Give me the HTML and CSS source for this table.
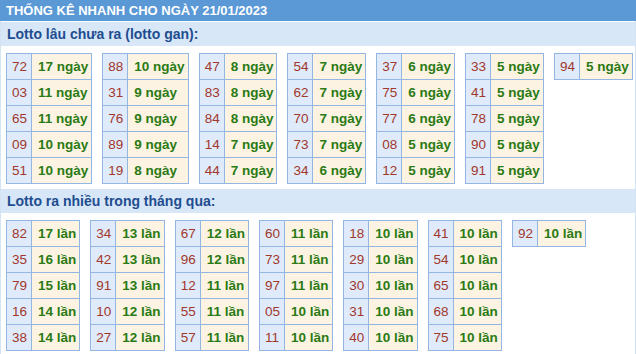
FILE: index.html
```html
<!DOCTYPE html>
<html lang="vi">
<head>
<meta charset="utf-8">
<title>Thống kê nhanh</title>
<link rel="stylesheet" href="styles.css">
</head>
<body>
<div class="box">
  <div class="head">THỐNG KÊ NHANH CHO NGÀY 21/01/2023</div>
  <div class="sec-title">Lotto lâu chưa ra (lotto gan):</div>
  <div class="tables">
    <table class="t"><tr><td class="n">72</td><td class="v">17 ngày</td></tr><tr><td class="n">03</td><td class="v">11 ngày</td></tr><tr><td class="n">65</td><td class="v">11 ngày</td></tr><tr><td class="n">09</td><td class="v">10 ngày</td></tr><tr><td class="n">51</td><td class="v">10 ngày</td></tr></table>
    <table class="t"><tr><td class="n">88</td><td class="v">10 ngày</td></tr><tr><td class="n">31</td><td class="v">9 ngày</td></tr><tr><td class="n">76</td><td class="v">9 ngày</td></tr><tr><td class="n">89</td><td class="v">9 ngày</td></tr><tr><td class="n">19</td><td class="v">8 ngày</td></tr></table>
    <table class="t"><tr><td class="n">47</td><td class="v">8 ngày</td></tr><tr><td class="n">83</td><td class="v">8 ngày</td></tr><tr><td class="n">84</td><td class="v">8 ngày</td></tr><tr><td class="n">14</td><td class="v">7 ngày</td></tr><tr><td class="n">44</td><td class="v">7 ngày</td></tr></table>
    <table class="t"><tr><td class="n">54</td><td class="v">7 ngày</td></tr><tr><td class="n">62</td><td class="v">7 ngày</td></tr><tr><td class="n">70</td><td class="v">7 ngày</td></tr><tr><td class="n">73</td><td class="v">7 ngày</td></tr><tr><td class="n">34</td><td class="v">6 ngày</td></tr></table>
    <table class="t"><tr><td class="n">37</td><td class="v">6 ngày</td></tr><tr><td class="n">75</td><td class="v">6 ngày</td></tr><tr><td class="n">77</td><td class="v">6 ngày</td></tr><tr><td class="n">08</td><td class="v">5 ngày</td></tr><tr><td class="n">12</td><td class="v">5 ngày</td></tr></table>
    <table class="t"><tr><td class="n">33</td><td class="v">5 ngày</td></tr><tr><td class="n">41</td><td class="v">5 ngày</td></tr><tr><td class="n">78</td><td class="v">5 ngày</td></tr><tr><td class="n">90</td><td class="v">5 ngày</td></tr><tr><td class="n">91</td><td class="v">5 ngày</td></tr></table>
    <table class="t"><tr><td class="n">94</td><td class="v">5 ngày</td></tr></table>
  </div>
  <div class="sec-title sec2">Lotto ra nhiều trong tháng qua:</div>
  <div class="tables">
    <table class="t"><tr><td class="n">82</td><td class="v">17 lần</td></tr><tr><td class="n">35</td><td class="v">16 lần</td></tr><tr><td class="n">79</td><td class="v">15 lần</td></tr><tr><td class="n">16</td><td class="v">14 lần</td></tr><tr><td class="n">38</td><td class="v">14 lần</td></tr></table>
    <table class="t"><tr><td class="n">34</td><td class="v">13 lần</td></tr><tr><td class="n">42</td><td class="v">13 lần</td></tr><tr><td class="n">91</td><td class="v">13 lần</td></tr><tr><td class="n">10</td><td class="v">12 lần</td></tr><tr><td class="n">27</td><td class="v">12 lần</td></tr></table>
    <table class="t"><tr><td class="n">67</td><td class="v">12 lần</td></tr><tr><td class="n">96</td><td class="v">12 lần</td></tr><tr><td class="n">12</td><td class="v">11 lần</td></tr><tr><td class="n">55</td><td class="v">11 lần</td></tr><tr><td class="n">57</td><td class="v">11 lần</td></tr></table>
    <table class="t"><tr><td class="n">60</td><td class="v">11 lần</td></tr><tr><td class="n">73</td><td class="v">11 lần</td></tr><tr><td class="n">97</td><td class="v">11 lần</td></tr><tr><td class="n">05</td><td class="v">10 lần</td></tr><tr><td class="n">11</td><td class="v">10 lần</td></tr></table>
    <table class="t"><tr><td class="n">18</td><td class="v">10 lần</td></tr><tr><td class="n">29</td><td class="v">10 lần</td></tr><tr><td class="n">30</td><td class="v">10 lần</td></tr><tr><td class="n">31</td><td class="v">10 lần</td></tr><tr><td class="n">40</td><td class="v">10 lần</td></tr></table>
    <table class="t"><tr><td class="n">41</td><td class="v">10 lần</td></tr><tr><td class="n">54</td><td class="v">10 lần</td></tr><tr><td class="n">65</td><td class="v">10 lần</td></tr><tr><td class="n">68</td><td class="v">10 lần</td></tr><tr><td class="n">75</td><td class="v">10 lần</td></tr></table>
    <table class="t"><tr><td class="n">92</td><td class="v">10 lần</td></tr></table>
  </div>
</div>
</body>
</html>
```
FILE: styles.css
```css
html, body {
  margin: 0;
  padding: 0;
  background: #ffffff;
}
body {
  font-family: Arial, "Liberation Sans", sans-serif;
}
.box {
  width: 636px;
  border-left: 1px solid #d3e3f4;
  border-right: 1px solid #d3e3f4;
  box-sizing: border-box;
}
.head {
  height: 21px;
  line-height: 21px;
  background: #5a98d6;
  color: #ffffff;
  font-size: 13px;
  font-weight: bold;
  padding-left: 6px;
  margin: 0 -1px;
}
.sec-title {
  margin-top: 1px;
  height: 24px;
  line-height: 24px;
  background: #d7e7f8;
  color: #1f4d8f;
  font-size: 14px;
  font-weight: bold;
  padding-left: 6px;
}
.sec-title.sec2 {
  margin-top: 0;
}
.tables {
  display: flex;
  align-items: flex-start;
  gap: 10px;
  padding: 7px 5px 5px 5px;
}
.t {
  border-collapse: collapse;
  font-size: 13.5px;
  flex: none;
}
.t td {
  border: 1px solid #94b6e2;
  height: 25px;
  white-space: nowrap;
}
.t td.n {
  background: #dfeafb;
  color: #a1382c;
  padding: 0 4px 0 5px;
}
.t td.v {
  background: #fdf3e2;
  color: #2a7a14;
  font-weight: bold;
  padding: 0 3px 0 6px;
}
```
